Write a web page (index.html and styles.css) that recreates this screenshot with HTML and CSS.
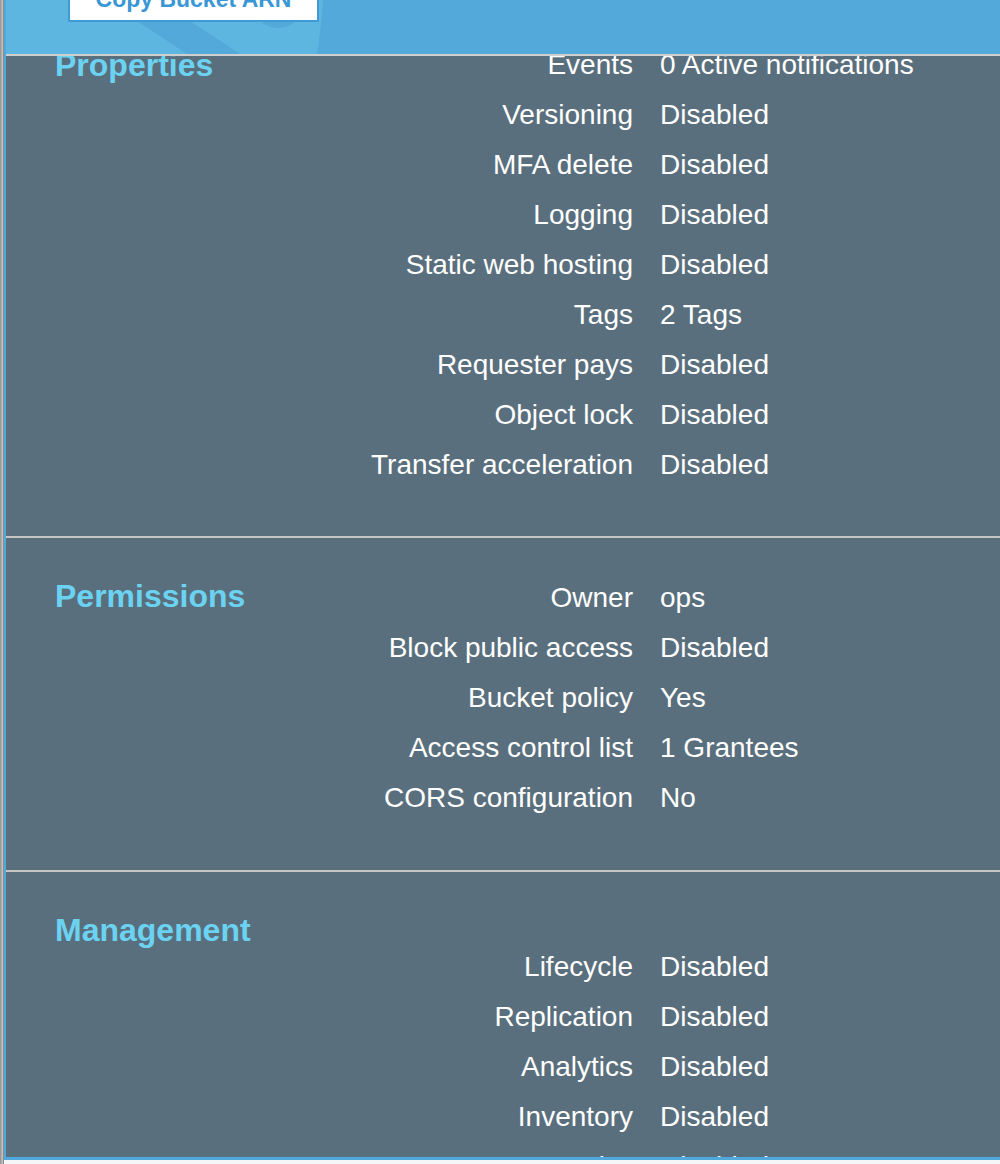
FILE: index.html
```html
<!DOCTYPE html>
<html lang="en">
<head>
<meta charset="utf-8">
<title>Bucket overview</title>
<link rel="stylesheet" href="styles.css">
</head>
<body>
<div class="desk">
  <div class="backdrop"></div>
  <div class="window">
    <header class="bar">
      <svg class="bar-art" width="994" height="54" viewBox="0 0 994 54" aria-hidden="true">
        <path d="M0 0 H317 Q315 30 311 54 H0 Z" fill="#5cb6e0"/>
        <path d="M121 15 L174 15 Q205 34 234 54 L181 54 Q150 33 121 15 Z" fill="#53a9da"/>
        <ellipse cx="272" cy="3" rx="26" ry="25" fill="#53a9da"/>
      </svg>
      <button class="arn-btn" type="button">Copy Bucket ARN</button>
    </header>
    <div class="panel">
      <div class="panel-scroll">
        <section class="section section--first">
          <h2 class="section-title">Properties</h2>
          <div class="rows">
            <span class="label">Events</span><span class="value">0 Active notifications</span>
            <span class="label">Versioning</span><span class="value">Disabled</span>
            <span class="label">MFA delete</span><span class="value">Disabled</span>
            <span class="label">Logging</span><span class="value">Disabled</span>
            <span class="label">Static web hosting</span><span class="value">Disabled</span>
            <span class="label">Tags</span><span class="value">2 Tags</span>
            <span class="label">Requester pays</span><span class="value">Disabled</span>
            <span class="label">Object lock</span><span class="value">Disabled</span>
            <span class="label">Transfer acceleration</span><span class="value">Disabled</span>
          </div>
        </section>
        <section class="section">
          <h2 class="section-title">Permissions</h2>
          <div class="rows">
            <span class="label">Owner</span><span class="value">ops</span>
            <span class="label">Block public access</span><span class="value">Disabled</span>
            <span class="label">Bucket policy</span><span class="value">Yes</span>
            <span class="label">Access control list</span><span class="value">1 Grantees</span>
            <span class="label">CORS configuration</span><span class="value">No</span>
          </div>
        </section>
        <section class="section section--stacked">
          <h2 class="section-title">Management</h2>
          <div class="rows">
            <span class="label">Lifecycle</span><span class="value">Disabled</span>
            <span class="label">Replication</span><span class="value">Disabled</span>
            <span class="label">Analytics</span><span class="value">Disabled</span>
            <span class="label">Inventory</span><span class="value">Disabled</span>
            <span class="label">Metrics</span><span class="value">Disabled</span>
          </div>
        </section>
      </div>
    </div>
  </div>
</div>
</body>
</html>
```

FILE: styles.css
```css
html, body {
  margin: 0;
  padding: 0;
  height: 100%;
}

body {
  background: #f4f6f8;
  font-family: "Liberation Sans", Arial, Helvetica, sans-serif;
}

.desk {
  display: flex;
  align-items: flex-start;
  height: 1164px;
  overflow: hidden;
}

.backdrop {
  flex: none;
  width: 4px;
  align-self: stretch;
  background: linear-gradient(to right, #9a9a9a 0, #9a9a9a 1px, #acacac 1px, #acacac 2px, #c2c2c2 2px, #c2c2c2 3px, #8a8a8a 3px);
}

.window {
  flex: 1;
  height: 1160px;
  box-sizing: border-box;
  border-left: 2px solid #4fa9dd;
  border-bottom: 3px solid #4fa9dd;
  display: flex;
  flex-direction: column;
  overflow: hidden;
}

.bar {
  position: relative;
  flex: none;
  height: 54px;
  box-sizing: border-box;
  padding-left: 62px;
  background: #53a9da;
  overflow: hidden;
}

.bar-art {
  position: absolute;
  left: 0;
  top: 0;
  display: block;
}

.arn-btn {
  position: relative;
  display: block;
  margin: -24px 0 0;
  width: 251px;
  height: 46px;
  padding: 0;
  box-sizing: border-box;
  border: 2px solid #3f9bd6;
  background: #ffffff;
  color: #3a97d5;
  font-family: "Liberation Sans", Arial, sans-serif;
  font-weight: bold;
  font-size: 23px;
}

.panel {
  flex: 1;
  min-height: 0;
  background: #5a6f7d;
  border-top: 2px solid #cfcfcf;
  overflow: hidden;
}

.panel-scroll {
  margin-top: -51px;
}

.section {
  display: grid;
  grid-template-columns: 1fr;
  padding: 35px 0 47px 49px;
}

.section--first {
  padding-bottom: 46px;
}

.section--first .section-title {
  margin-top: 10px;
}

.section + .section {
  border-top: 2px solid #c6c6c6;
}

.section-title {
  grid-area: 1 / 1;
  align-self: start;
  margin: 8px 0 0;
  font-size: 32px;
  line-height: 30px;
  font-weight: bold;
  color: #6bd3f1;
}

.rows {
  grid-area: 1 / 1;
  display: grid;
  grid-template-columns: 578px auto;
  column-gap: 27px;
  font-size: 28px;
  line-height: 50px;
  color: #ffffff;
  white-space: nowrap;
}

.section--stacked .rows {
  grid-area: 2 / 1;
  margin-top: -3px;
}

.label {
  text-align: right;
}

.value {
  text-align: left;
}
```
